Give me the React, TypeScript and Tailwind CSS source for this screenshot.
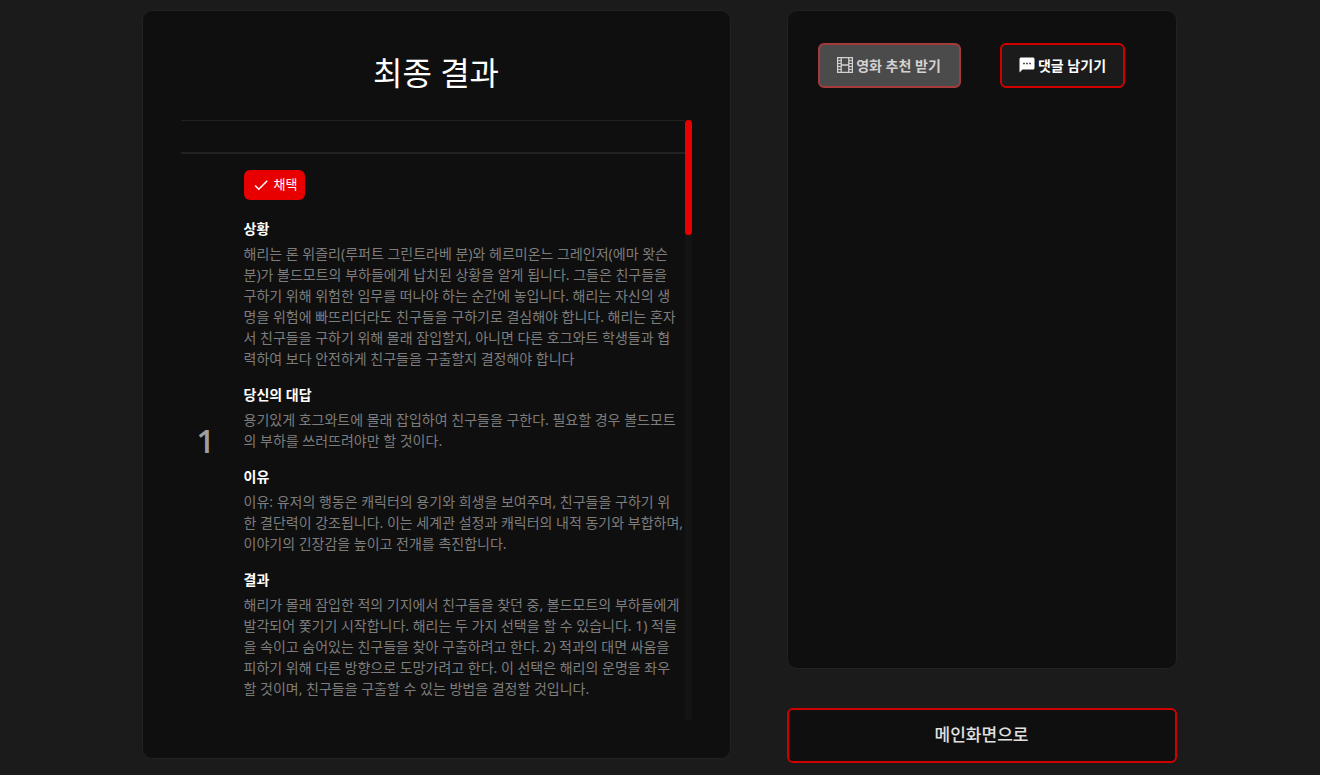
import { MdCheck, MdSms } from "react-icons/md";

const sections = [
  {
    title: "상황",
    lines: [
      "해리는 론 위즐리(루퍼트 그린트라베 분)와 헤르미온느 그레인저(에마 왓슨",
      "분)가 볼드모트의 부하들에게 납치된 상황을 알게 됩니다. 그들은 친구들을",
      "구하기 위해 위험한 임무를 떠나야 하는 순간에 놓입니다. 해리는 자신의 생",
      "명을 위험에 빠뜨리더라도 친구들을 구하기로 결심해야 합니다. 해리는 혼자",
      "서 친구들을 구하기 위해 몰래 잠입할지, 아니면 다른 호그와트 학생들과 협",
      "력하여 보다 안전하게 친구들을 구출할지 결정해야 합니다",
    ],
  },
  {
    title: "당신의 대답",
    lines: [
      "용기있게 호그와트에 몰래 잡입하여 친구들을 구한다. 필요할 경우 볼드모트",
      "의 부하를 쓰러뜨려야만 할 것이다.",
    ],
  },
  {
    title: "이유",
    lines: [
      "이유: 유저의 행동은 캐릭터의 용기와 희생을 보여주며, 친구들을 구하기 위",
      "한 결단력이 강조됩니다. 이는 세계관 설정과 캐릭터의 내적 동기와 부합하며,",
      "이야기의 긴장감을 높이고 전개를 촉진합니다.",
    ],
  },
  {
    title: "결과",
    lines: [
      "해리가 몰래 잠입한 적의 기지에서 친구들을 찾던 중, 볼드모트의 부하들에게",
      "발각되어 쫓기기 시작합니다. 해리는 두 가지 선택을 할 수 있습니다. 1) 적들",
      "을 속이고 숨어있는 친구들을 찾아 구출하려고 한다. 2) 적과의 대면 싸움을",
      "피하기 위해 다른 방향으로 도망가려고 한다. 이 선택은 해리의 운명을 좌우",
      "할 것이며, 친구들을 구출할 수 있는 방법을 결정할 것입니다.",
    ],
  },
];

function FilmIcon() {
  return (
    <svg viewBox="0 0 16 16" className="size-4" fill="none" stroke="currentColor" aria-hidden="true">
      <path d="M.6 .6h14.8v14.8H.6zM4.2 .6v14.8M11.8 .6v14.8M4.2 8h7.6" strokeWidth="1.3" />
      <path d="M.6 3.6h3.6M.6 6.5h3.6M.6 9.5h3.6M.6 12.4h3.6M11.8 3.6h3.6M11.8 6.5h3.6M11.8 9.5h3.6M11.8 12.4h3.6" strokeWidth="1" />
    </svg>
  );
}

export default function App() {
  return (
    <div className="flex min-h-screen items-start justify-center gap-14 bg-[#1b1b1b] pr-0.5 pt-2.5 font-['Noto_Sans','Noto_Sans_CJK_KR',sans-serif] text-white">
      <main className="w-full max-w-[589px] rounded-[10px] border border-[#222] bg-[#0f0f0f] p-[38px]">
        <h1 className="text-center text-[32px] leading-[48px]">최종 결과</h1>
        <div className="mt-[23px] flex h-[600px]">
          <div className="min-w-0 flex-1 overflow-hidden">
            <div className="h-[34px] border-b-2 border-t border-b-[#222] border-t-[#222]" />
            <div className="flex items-center">
              <div className="w-[63px] shrink-0 pl-4 font-['Open_Sans',sans-serif] text-[32px] font-semibold leading-none text-[#a0a0a0]">1</div>
              <div className="min-w-0 flex-1 pb-7 pt-4">
                <span className="mb-[3px] inline-flex h-[30px] items-center gap-1 rounded-[6px] bg-[#e80000] px-2 text-[13px]">
                  <MdCheck className="size-[18px]" />
                  채택
                </span>
                {sections.map((s) => (
                  <section key={s.title} className="mt-[13px]">
                    <h2 className="mb-px text-[14px] font-bold leading-[26px]">{s.title}</h2>
                    <p className="whitespace-pre text-[14px] leading-[21px] text-[#7d7d7d]">{s.lines.join("\n")}</p>
                  </section>
                ))}
              </div>
            </div>
          </div>
          <div className="w-[7px] shrink-0 rounded-full bg-[#141414]">
            <div className="h-[115px] rounded-full bg-[#e80000]" />
          </div>
        </div>
      </main>

      <aside className="flex w-full max-w-[390px] flex-col gap-[39px]">
        <div className="min-h-[659px] rounded-[10px] border border-[#222] bg-[#0f0f0f] px-[30px] pt-8">
          <div className="flex gap-[39px]">
            <button type="button" className="flex h-[45px] w-[143px] items-center justify-center gap-[3px] rounded-[6px] border-2 border-[#a53c3c] bg-[#4b4b4b] pb-px text-[14px] font-bold text-[#d2d2d2]">
              <FilmIcon />
              영화 추천 받기
            </button>
            <button type="button" className="flex h-[45px] w-[125px] items-center justify-center gap-0.5 rounded-[6px] border-2 border-[#d00000] bg-[#1b1b1b] pb-px text-[14px] font-bold">
              <MdSms className="size-[18px]" />
              댓글 남기기
            </button>
          </div>
        </div>
        <button type="button" className="h-[55px] rounded-[6px] border-2 border-[#d00000] bg-[#0f0f0f] pb-0.5 text-[17px] font-medium text-[#e0e0e0]">
          메인화면으로
        </button>
      </aside>
    </div>
  );
}
